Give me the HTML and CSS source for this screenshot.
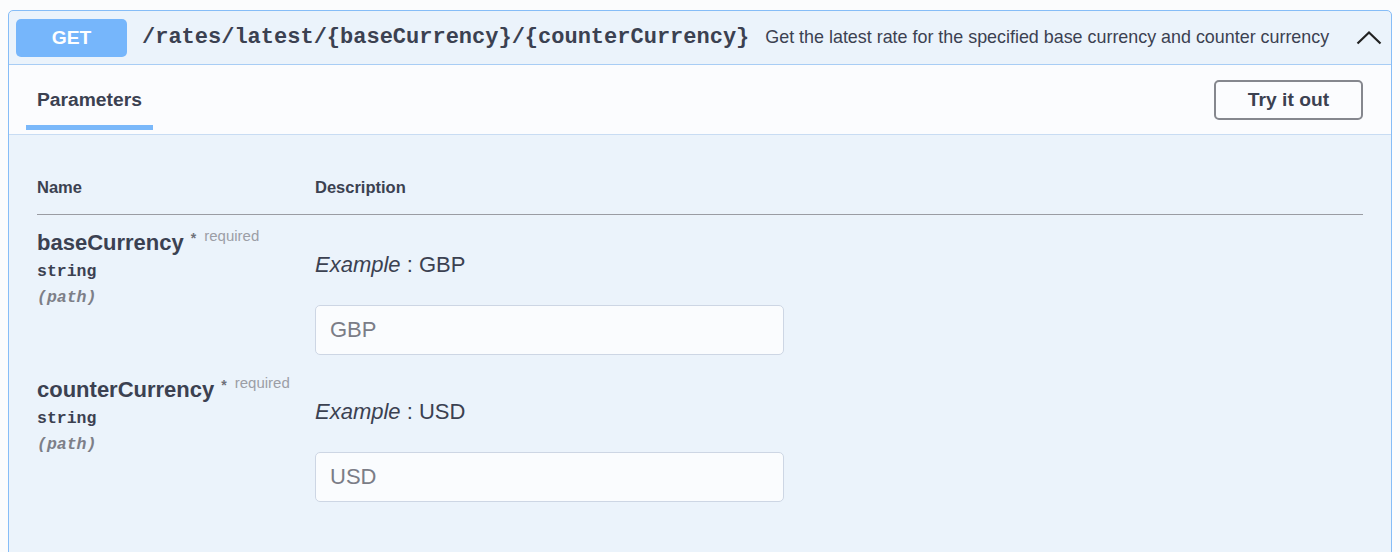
FILE: index.html
```html
<!DOCTYPE html>
<html lang="en">
<head>
<meta charset="utf-8">
<title>GET /rates/latest</title>
<link rel="stylesheet" href="styles.css">
</head>
<body>
<div class="opblock">
  <div class="summary">
    <span class="method">GET</span>
    <span class="path">/rates/latest/{baseCurrency}/{counterCurrency}</span>
    <span class="summary-desc">Get the latest rate for the specified base currency and counter currency</span>
    <svg class="chevron" width="26" height="15" viewBox="0 0 26 15"><polyline points="1.5,13.5 13,2.5 24.5,13.5" fill="none" stroke="#222" stroke-width="2.2"/></svg>
  </div>
  <div class="section-header">
    <div class="tab-item"><h4 class="tab-title">Parameters</h4></div>
    <button class="try-btn">Try it out</button>
  </div>
  <div class="params">
    <div class="table-head">
      <div class="col-name">Name</div>
      <div class="col-desc">Description</div>
    </div>
    <div class="param-row">
      <div class="col-name">
        <div class="param-name">baseCurrency<span class="star">*</span><span class="req">required</span></div>
        <div class="param-type">string</div>
        <div class="param-in">(path)</div>
      </div>
      <div class="col-desc desc-cell">
        <div class="example"><i>Example</i> : GBP</div>
        <input class="param-input" type="text" placeholder="GBP">
      </div>
    </div>
    <div class="param-row">
      <div class="col-name">
        <div class="param-name">counterCurrency<span class="star">*</span><span class="req">required</span></div>
        <div class="param-type">string</div>
        <div class="param-in">(path)</div>
      </div>
      <div class="col-desc desc-cell">
        <div class="example"><i>Example</i> : USD</div>
        <input class="param-input" type="text" placeholder="USD">
      </div>
    </div>
  </div>
</div>
</body>
</html>
```
FILE: styles.css
```css
* { box-sizing: border-box; }
html, body { margin: 0; padding: 0; }
body {
  background: #fbfcfd;
  font-family: "Liberation Sans", Arial, sans-serif;
  color: #3b4151;
  height: 552px;
  overflow: hidden;
}
.opblock {
  margin: 10px 8px 0 8px;
  border: 1px solid #86bdf7;
  border-radius: 5px;
  background: #ebf3fb;
}
.summary {
  display: flex;
  align-items: center;
  height: 54px;
  padding: 7px 9px 7px 7px;
  border-bottom: 1px solid #a8cdf5;
}
.method {
  width: 111px;
  height: 38px;
  border-radius: 5px;
  background: #76b6fb;
  color: #fff;
  font-weight: bold;
  font-size: 19.25px;
  display: flex;
  align-items: center;
  justify-content: center;
}
.path {
  margin-left: 15px;
  font-family: "Liberation Mono", "Courier New", monospace;
  font-weight: bold;
  font-size: 22px;
  color: #3b4151;
}
.summary-desc {
  margin-left: 16px;
  font-size: 17.9px;
  color: #3b4151;
}
.chevron {
  margin-left: auto;
  margin-top: 0;
}
.section-header {
  display: flex;
  align-items: center;
  justify-content: space-between;
  height: 70px;
  padding: 0 28px 0 17px;
  background: #fbfcfe;
  border-bottom: 1px solid #c8dcf3;
}
.tab-item {
  align-self: stretch;
  display: flex;
  flex-direction: column;
  width: 127px;
  padding-left: 11px;
}
.tab-title {
  margin: 24px 0 0 0;
  font-size: 19.25px;
  line-height: 22px;
  font-weight: bold;
  color: #3b4151;
}
.tab-item::after {
  content: "";
  display: block;
  height: 5px;
  margin: 14px 0 0 -11px;
  background: #7ab8fa;
}
.try-btn {
  width: 149px;
  height: 40px;
  border: 2px solid #85878e;
  border-radius: 5px;
  background: transparent;
  font-family: "Liberation Sans", Arial, sans-serif;
  font-weight: bold;
  font-size: 19.25px;
  color: #3b4151;
  padding: 0;
}
.params {
  padding: 42px 28px 60px 28px;
}
.table-head {
  display: grid;
  grid-template-columns: 278px 1fr;
  font-size: 16.5px;
  line-height: 20px;
  font-weight: bold;
  padding-bottom: 17px;
  border-bottom: 1px solid #9a9ca3;
}
.param-row {
  display: grid;
  grid-template-columns: 278px 1fr;
  padding: 15px 0 7px 0;
}
.param-name {
  font-size: 22px;
  line-height: 25px;
  height: 25px;
  font-weight: bold;
  white-space: nowrap;
}
.star {
  font-size: 14px;
  line-height: 0;
  color: #6f717a;
  margin-left: 7px;
  vertical-align: 7px;
  font-weight: bold;
}
.req {
  font-size: 15px;
  line-height: 0;
  color: #9c9ea6;
  font-weight: normal;
  margin-left: 8px;
  vertical-align: 9px;
}
.param-type {
  margin-top: 7px;
  font-family: "Liberation Mono", "Courier New", monospace;
  font-weight: bold;
  font-size: 16.5px;
  line-height: 20px;
}
.param-in {
  margin-top: 6px;
  font-family: "Liberation Mono", "Courier New", monospace;
  font-style: italic;
  font-weight: bold;
  font-size: 16.5px;
  line-height: 20px;
  color: #7d7f88;
}
.desc-cell {
  padding-top: 22px;
  display: flex;
  flex-direction: column;
  align-items: flex-start;
}
.example {
  font-size: 22px;
  line-height: 25px;
}
.param-input {
  margin-top: 28px;
  width: 469px;
  height: 50px;
  border: 1px solid #cdd6e4;
  border-radius: 5px;
  background: #fafcfe;
  padding: 0 14px;
  font-family: "Liberation Sans", Arial, sans-serif;
  font-size: 22px;
  color: #3b4151;
}
.param-input::placeholder { color: #7b7d87; }
```
